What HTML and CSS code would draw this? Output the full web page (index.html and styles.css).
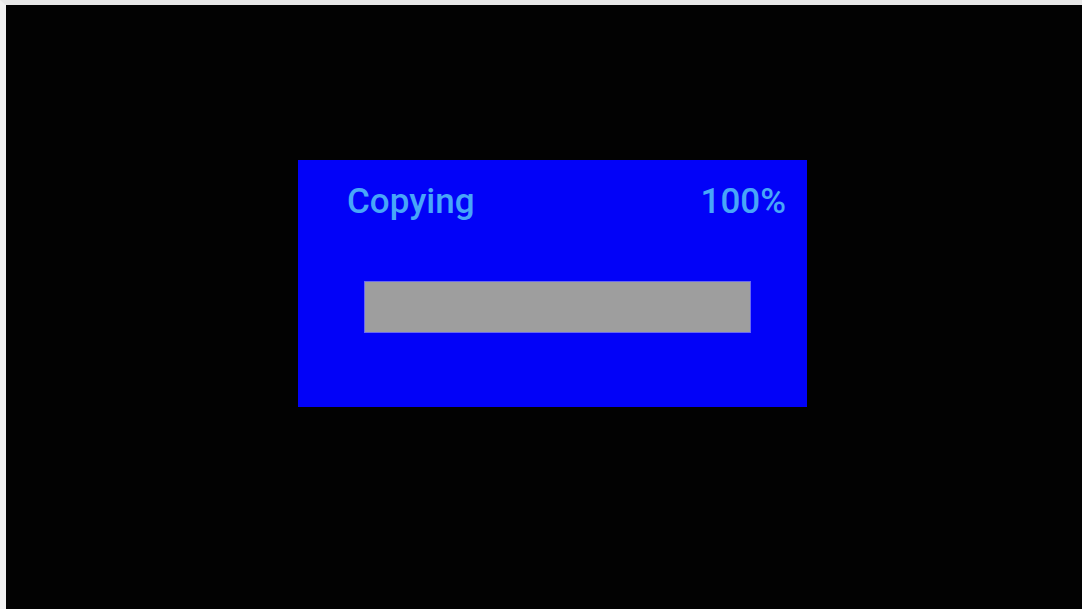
FILE: index.html
```html
<!DOCTYPE html>
<html>
<head>
<meta charset="utf-8">
<link rel="stylesheet" href="styles.css">
</head>
<body>
<div class="screen">
  <div class="dialog">
    <div class="header">
      <span class="title">Copying</span>
      <span class="percent">100%</span>
    </div>
    <div class="bar"></div>
  </div>
</div>
</body>
</html>
```
FILE: styles.css
```css
html, body {
  margin: 0;
  padding: 0;
  background: #000;
  width: 1082px;
  height: 609px;
  overflow: hidden;
}
.screen {
  box-sizing: border-box;
  width: 1082px;
  height: 609px;
  background: #020202;
  border-top: 5px solid #e8e8e8;
  border-left: 6px solid #f2f2f2;
  padding-top: 155px;
  padding-left: 292px;
}
.dialog {
  box-sizing: border-box;
  width: 509px;
  height: 247px;
  background: #0202f8;
  padding: 21px 21px 0 49px;
  display: flex;
  flex-direction: column;
}
.header {
  display: flex;
  justify-content: space-between;
  font-family: Roboto, "Noto Sans", sans-serif;
  font-size: 35px;
  font-weight: 500;
  line-height: 41px;
  color: #48a6f8;
}
.bar {
  margin-top: 60px;
  margin-left: 18px;
  width: 385px;
  height: 50px;
  background: #9e9e9e;
  box-shadow: 0 0 0 1px #6a6af0;
}
```
